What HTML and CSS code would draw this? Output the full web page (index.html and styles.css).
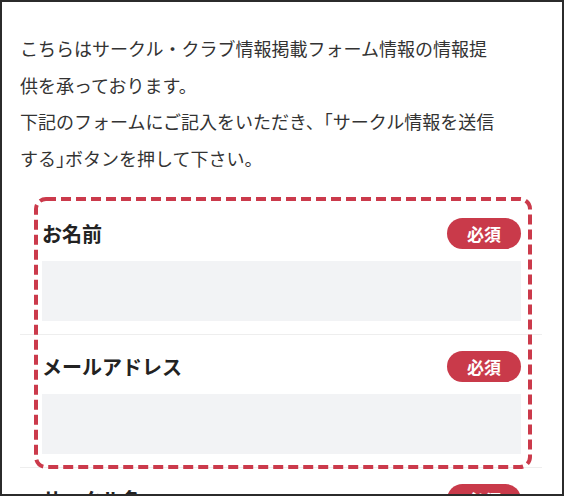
FILE: index.html
```html
<!DOCTYPE html>
<html lang="ja">
<head>
<meta charset="utf-8">
<title>サークル情報フォーム</title>
<link rel="stylesheet" href="styles.css">
</head>
<body>
<div class="frame">
  <p class="intro">こちらはサークル・クラブ情報掲載フォーム情報の情報提供を承っております。<br>下記のフォームにご記入をいただき、「サークル情報を送信する<span class="punct">」</span>ボタンを押して下さい。</p>
  <div class="form">
    <div class="row">
      <div class="row-head">
        <span class="label">お名前</span>
        <span class="badge">必須</span>
      </div>
      <div class="input"></div>
    </div>
    <div class="row">
      <div class="row-head">
        <span class="label">メールアドレス</span>
        <span class="badge">必須</span>
      </div>
      <div class="input"></div>
    </div>
    <div class="row">
      <div class="row-head">
        <span class="label">サークル名</span>
        <span class="badge">必須</span>
      </div>
      <div class="input"></div>
    </div>
  </div>
  <svg class="highlight" width="498" height="272" viewBox="0 0 498 272" aria-hidden="true">
    <rect x="2" y="2" width="494" height="268" rx="10" ry="10" fill="none" stroke="#cb3a4b" stroke-width="4" stroke-dasharray="10 5"/>
  </svg>
</div>
</body>
</html>
```
FILE: styles.css
```css
* { box-sizing: border-box; }
html, body { margin: 0; padding: 0; background: #ffffff; }
body {
  font-family: "Noto Sans CJK JP", "Noto Sans", sans-serif;
  color: #333333;
}
.frame {
  position: relative;
  width: 564px;
  height: 496px;
  border: 2px solid #2b2b2b;
  padding: 28px 20px 0 18px;
  overflow: hidden;
  background: #ffffff;
}
.intro {
  margin: 0 0 26px 0;
  padding-right: 40px;
  font-size: 18px;
  line-height: 36.5px;
  color: #333333;
}
.punct {
  font-feature-settings: "halt";
}
.form {
  display: flex;
  flex-direction: column;
}
.row {
  padding: 16px 21px 13px 22px;
  border-bottom: 1px solid #eeeeee;
}
.row-head {
  display: flex;
  align-items: center;
  justify-content: space-between;
  height: 31px;
}
.label {
  font-size: 20px;
  font-weight: 700;
  color: #222222;
  line-height: 31px;
}
.badge {
  display: flex;
  align-items: center;
  justify-content: center;
  width: 74px;
  height: 31px;
  border-radius: 16px;
  background: #c93a4a;
  color: #ffffff;
  font-size: 17px;
  font-weight: 700;
}
.input {
  margin-top: 12px;
  height: 60px;
  background: #f2f3f5;
}
.highlight {
  position: absolute;
  left: 32px;
  top: 195px;
}
```
